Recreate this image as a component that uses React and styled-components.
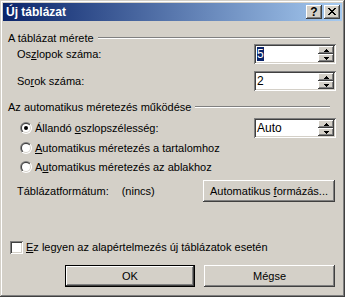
import React, { useId } from 'react';
import styled, { createGlobalStyle } from 'styled-components';

const GlobalStyle = createGlobalStyle`
  html, body {
    margin: 0;
    padding: 0;
    background: #d4d0c8;
  }
  body {
    font-family: "Liberation Sans", Arial, sans-serif;
    font-size: 11px;
    color: #000;
  }
`;

const raised = `
  box-shadow: inset -1px -1px #404040, inset 1px 1px #fff,
    inset -2px -2px #808080, inset 2px 2px #d4d0c8;
`;

const sunken = `
  box-shadow: inset 1px 1px #808080, inset -1px -1px #fff,
    inset 2px 2px #404040, inset -2px -2px #d4d0c8;
`;

const Window = styled.div`
  width: 345px;
  height: 297px;
  box-sizing: border-box;
  padding: 3px;
  background: #d4d0c8;
  box-shadow: inset -1px -1px #404040, inset 1px 1px #d4d0c8,
    inset -2px -2px #808080, inset 2px 2px #fff;
  display: flex;
  flex-direction: column;
`;

const TitleBar = styled.div`
  height: 18px;
  display: flex;
  align-items: center;
  gap: 2px;
  padding: 0 2px 0 3px;
  background: linear-gradient(to right, #0a246a, #a6caf0);
`;

const Title = styled.div`
  flex: 1;
  color: #fff;
  font-weight: bold;
  font-size: 12px;
`;

const TitleButton = styled.div`
  width: 16px;
  height: 14px;
  box-sizing: border-box;
  background: #d4d0c8;
  ${raised}
  display: flex;
  align-items: center;
  justify-content: center;
  font-weight: bold;
  font-size: 12px;
  line-height: 14px;
  padding-bottom: 1px;
`;

const Body = styled.div`
  display: flex;
  flex-direction: column;
  padding: 0 6px 0 5px;
`;

const GroupHeader = styled.div`
  display: flex;
  align-items: center;
  height: 13px;
  margin-top: ${({ $top }) => $top}px;
`;

const GroupLine = styled.div`
  flex: 1;
  margin: 0 6px 0 4px;
  border-top: 1px solid #808080;
  border-bottom: 1px solid #fff;
`;

const FieldRow = styled.div`
  display: flex;
  align-items: center;
  justify-content: space-between;
  height: 20px;
  padding-left: 9px;
  margin-top: ${({ $top }) => $top || 0}px;
`;

const SpinBox = styled.div`
  width: 82px;
  height: 20px;
  box-sizing: border-box;
  padding: 2px;
  background: #fff;
  ${sunken}
  display: flex;
`;

const SpinValue = styled.div`
  flex: 1;
  padding-left: 1px;
  line-height: 16px;
  font-size: 12px;
`;

const Selected = styled.span`
  background: #0a246a;
  color: #fff;
`;

const SpinButtons = styled.div`
  width: 16px;
  display: flex;
  flex-direction: column;
`;

const SpinButton = styled.div`
  flex: 1;
  background: #d4d0c8;
  ${raised}
  display: flex;
  align-items: center;
  justify-content: center;
`;

const RadioRow = styled.div`
  display: flex;
  align-items: center;
  height: ${({ $h }) => $h}px;
  padding-left: 12px;
  margin-top: ${({ $top }) => $top || 0}px;
`;

const RadioLabel = styled.span`
  margin-left: 3px;
  flex: 1;
`;

const U = styled.span`
  text-decoration: underline;
`;

const FormatRow = styled.div`
  display: flex;
  align-items: center;
  height: 22px;
  padding-left: 9px;
  margin-top: 4px;
`;

const FormatValue = styled.span`
  margin-left: 13px;
  flex: 1;
`;

const Button = styled.div`
  width: ${({ $w }) => $w}px;
  height: 22px;
  box-sizing: border-box;
  background: #d4d0c8;
  border: ${({ $default }) => ($default ? '1px solid #000' : 'none')};
  ${raised}
  display: flex;
  align-items: center;
  justify-content: center;
  margin-right: ${({ $right }) => $right || 0}px;
`;

const CheckRow = styled.div`
  display: flex;
  align-items: center;
  height: 14px;
  padding-left: 2px;
  margin-top: 38px;
`;

const CheckBox = styled.span`
  width: 13px;
  height: 13px;
  box-sizing: border-box;
  background: #fff;
  ${sunken}
  margin-right: 3px;
`;

const ButtonRow = styled.div`
  display: flex;
  justify-content: flex-end;
  gap: 9px;
  margin-top: 11px;
  padding-right: 1px;
`;

const CloseGlyph = () => {
  const rows = ['11000011', '01100110', '00111100', '00011000', '00111100', '01100110', '11000011'];
  return (
    <svg width="8" height="7" shapeRendering="crispEdges">
      {rows.map((r, y) =>
        r.split('').map((c, x) => (c === '1' ? <rect key={`${x}-${y}`} x={x} y={y} width="1" height="1" fill="#000" /> : null))
      )}
    </svg>
  );
};

const Arrow = ({ up }) => (
  <svg width="5" height="3" shapeRendering="crispEdges">
    {up ? (
      <>
        <rect x="2" y="0" width="1" height="1" />
        <rect x="1" y="1" width="3" height="1" />
        <rect x="0" y="2" width="5" height="1" />
      </>
    ) : (
      <>
        <rect x="0" y="0" width="5" height="1" />
        <rect x="1" y="1" width="3" height="1" />
        <rect x="2" y="2" width="1" height="1" />
      </>
    )}
  </svg>
);

const Radio = ({ checked }) => {
  const id = useId().replace(/:/g, '');
  return (
    <svg width="12" height="12">
      <defs>
        <linearGradient id={`o${id}`} x1="0" y1="0" x2="1" y2="1">
          <stop offset="0.5" stopColor="#808080" />
          <stop offset="0.5" stopColor="#fff" />
        </linearGradient>
        <linearGradient id={`i${id}`} x1="0" y1="0" x2="1" y2="1">
          <stop offset="0.5" stopColor="#404040" />
          <stop offset="0.5" stopColor="#d4d0c8" />
        </linearGradient>
      </defs>
      <circle cx="6" cy="6" r="6" fill={`url(#o${id})`} />
      <circle cx="6" cy="6" r="5" fill={`url(#i${id})`} />
      <circle cx="6" cy="6" r="4" fill="#fff" />
      {checked && <circle cx="6" cy="6" r="2" fill="#000" />}
    </svg>
  );
};

const Spin = ({ children }) => (
  <SpinBox>
    <SpinValue>{children}</SpinValue>
    <SpinButtons>
      <SpinButton>
        <Arrow up />
      </SpinButton>
      <SpinButton>
        <Arrow />
      </SpinButton>
    </SpinButtons>
  </SpinBox>
);

const App = () => {
  return (
    <>
      <GlobalStyle />
      <Window>
        <TitleBar>
          <Title>Új táblázat</Title>
          <TitleButton>?</TitleButton>
          <TitleButton>
            <CloseGlyph />
          </TitleButton>
        </TitleBar>
        <Body>
          <GroupHeader $top={10}>
            A táblázat mérete
            <GroupLine />
          </GroupHeader>
          <FieldRow>
            <span>
              Os<U>z</U>lopok száma:
            </span>
            <Spin>
              <Selected>5</Selected>
            </Spin>
          </FieldRow>
          <FieldRow $top={7}>
            <span>
              So<U>r</U>ok száma:
            </span>
            <Spin>2</Spin>
          </FieldRow>

          <GroupHeader $top={9}>
            Az automatikus méretezés működése
            <GroupLine />
          </GroupHeader>
          <RadioRow $h={20} $top={5}>
            <Radio checked />
            <RadioLabel>
              Állandó <U>o</U>szlopszélesség:
            </RadioLabel>
            <Spin>Auto</Spin>
          </RadioRow>
          <RadioRow $h={19}>
            <Radio />
            <RadioLabel>
              <U>A</U>utomatikus méretezés a tartalomhoz
            </RadioLabel>
          </RadioRow>
          <RadioRow $h={19}>
            <Radio />
            <RadioLabel>
              A<U>u</U>tomatikus méretezés az ablakhoz
            </RadioLabel>
          </RadioRow>
          <FormatRow>
            <span>Táblázatformátum:</span>
            <FormatValue>(nincs)</FormatValue>
            <Button $w={132} $right={1}>
              Automatikus&nbsp;<U>f</U>ormázás...
            </Button>
          </FormatRow>

          <CheckRow>
            <CheckBox />
            <span>
              <U>E</U>z legyen az alapértelmezés új táblázatok esetén
            </span>
          </CheckRow>
          <ButtonRow>
            <Button $w={130} $default>
              OK
            </Button>
            <Button $w={131}>Mégse</Button>
          </ButtonRow>
        </Body>
      </Window>
    </>
  );
};

export default App;
